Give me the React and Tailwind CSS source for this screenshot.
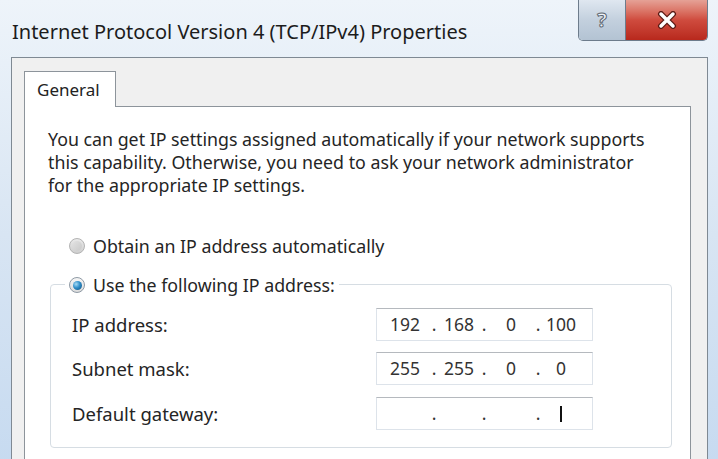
import React, { Fragment } from "react";

function Radio({ checked }) {
  if (checked) {
    return (
      <span className="flex h-[16px] w-[16px] shrink-0 items-center justify-center rounded-full border border-[#8f9aa5] bg-gradient-to-b from-[#f6f6f6] to-[#dcdcdc]">
        <span className="h-[9px] w-[9px] rounded-full bg-[radial-gradient(circle_at_35%_35%,#a6dbf5_0%,#2f8ec9_45%,#0c4a78_100%)]" />
      </span>
    );
  }
  return (
    <span className="flex h-[16px] w-[16px] shrink-0 items-center justify-center rounded-full border border-[#b3b3b3] bg-gradient-to-b from-[#e9e9e9] to-[#cfcfcf]">
      <span className="h-[10px] w-[10px] rounded-full bg-gradient-to-br from-[#e2e2e2] to-[#c9c9c9]" />
    </span>
  );
}

const SEG_W = ["w-[48px]", "w-[40px]", "w-[44px]", "w-[36px]"];

function IpField({ parts, caret }) {
  return (
    <div className="flex h-[33px] w-[217px] items-center border border-[#dde3ea] border-t-[#b5b9be] bg-white pl-[4px] text-[17.5px] text-[#333]">
      {parts.map((p, i) => (
        <Fragment key={i}>
          <span className={`${SEG_W[i]} flex items-center justify-center`}>
            {p}
            {caret && i === 3 && <span className="inline-block h-[16px] w-[2px] bg-[#111]" />}
          </span>
          {i < 3 && <span className="w-[10px] text-center">.</span>}
        </Fragment>
      ))}
    </div>
  );
}

function Row({ label, children, className }) {
  return (
    <div className={`flex items-center ${className}`}>
      <span className="w-[304px] text-[18.5px] text-[#252525]">{label}</span>
      {children}
    </div>
  );
}

export default function App() {
  return (
    <div className="h-[459px] w-[718px] overflow-hidden bg-white font-['Noto_Sans','Open_Sans',sans-serif]">
      <div className="flex h-[470px] w-[718px] flex-col bg-gradient-to-b from-[#eef4fa] via-[#d8e5f3] to-[#c6daf0] pl-[11px] pr-[10px]">
        {/* caption */}
        <div className="flex h-[57px] shrink-0 items-start justify-between">
          <div className="pt-[19px] pl-[1px] text-[20px] leading-[26px] text-[#1c1c1c]">
            Internet Protocol Version 4 (TCP/IPv4) Properties
          </div>
          <div className="flex h-[41px] overflow-hidden rounded-b-[5px] border border-t-0 border-[#6d7c8c]">
            <div className="flex w-[47px] items-center justify-center border-r border-[#6d7c8c] bg-gradient-to-b from-[#dfe7f0] via-[#c3d0de] to-[#b3c3d3]">
              <span className="text-[20px] font-bold leading-none text-[#eef3f8] [-webkit-text-stroke:1px_#5c6570]">?</span>
            </div>
            <div className="flex w-[81px] items-center justify-center bg-gradient-to-b from-[#e5a196] via-[#cf4b3e] to-[#b8281c]">
              <svg width="20" height="18" viewBox="0 0 20 18">
                <path d="M4 3 L16 15 M16 3 L4 15" stroke="#5a1a14" strokeWidth="6" strokeLinecap="round" />
                <path d="M4 3 L16 15 M16 3 L4 15" stroke="#ffffff" strokeWidth="3.5" strokeLinecap="round" />
              </svg>
            </div>
          </div>
        </div>

        {/* client area */}
        <div className="flex flex-1 flex-col border border-[#7f8993] bg-[#f0f0f0] pl-[12px] pr-[16px] pt-[13px]">
          <div className="relative z-10 -mb-px flex h-[36px] w-[92px] items-center border border-b-0 border-[#8d949b] bg-white pl-[12px] text-[17px] text-[#222]">
            General
          </div>
          <div className="flex-1 border border-[#8d949b] bg-white pl-[23px] pt-[21px]">
            <p className="whitespace-nowrap text-[17.8px] leading-[23px] text-[#252525]">
              You can get IP settings assigned automatically if your network supports
              <br />
              this capability. Otherwise, you need to ask your network administrator
              <br />
              for the appropriate IP settings.
            </p>

            <div className="ml-[21px] mt-[37px] flex h-[24px] items-center gap-[8px] text-[17.8px] text-[#252525]">
              <Radio />
              <span>Obtain an IP address automatically</span>
            </div>

            <div className="ml-[2px] mt-[26px] w-[622px] rounded-[4px] border border-[#d6dde3] pb-[17px] pl-[21px]">
              <div className="-mt-[12px] ml-[-7px] flex h-[24px] w-fit items-center gap-[8px] bg-white px-[4px] text-[17.8px] text-[#252525]">
                <Radio checked />
                <span>Use the following IP address:</span>
              </div>
              <Row label="IP address:" className="mt-[11px]">
                <IpField parts={["192", "168", "0", "100"]} />
              </Row>
              <Row label="Subnet mask:" className="mt-[11px]">
                <IpField parts={["255", "255", "0", "0"]} />
              </Row>
              <Row label="Default gateway:" className="mt-[12px]">
                <IpField parts={["", "", "", ""]} caret />
              </Row>
            </div>
          </div>
        </div>
      </div>
    </div>
  );
}
